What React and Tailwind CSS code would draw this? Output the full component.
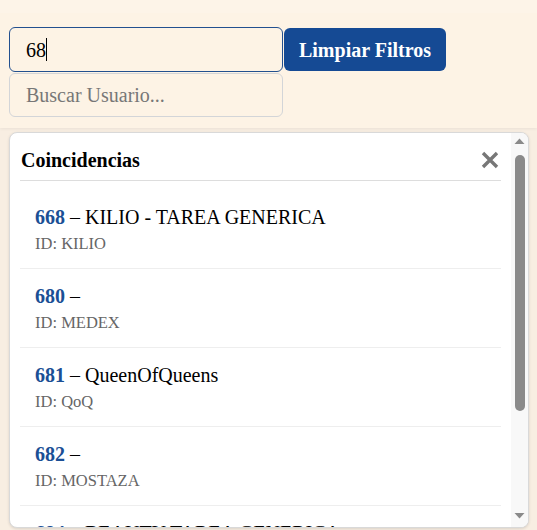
import React from "react";

const items = [
  { num: "668", name: "KILIO - TAREA GENERICA", id: "KILIO" },
  { num: "680", name: "", id: "MEDEX" },
  { num: "681", name: "QueenOfQueens", id: "QoQ" },
  { num: "682", name: "", id: "MOSTAZA" },
  { num: "684", name: "BEAUTY TAREA GENERICA", id: "BEAUTY" },
];

export default function App() {
  return (
    <div
      className="w-[537px] h-[530px] overflow-hidden bg-[#f8eee2] flex flex-col"
      style={{ fontFamily: '"Liberation Serif", "Times New Roman", serif' }}
    >
      <div className="h-[128px] shrink-0 bg-[#fdf3e5] border-t-[13px] border-[#fdf4e8] pt-[14px] pl-[9px] shadow-[0_1px_3px_rgba(0,0,0,0.06)]">
        <div className="flex items-start">
          <div className="flex flex-col">
            <div className="w-[274px] h-[45px] rounded-[6px] border border-[#23508f] bg-[#fdf3e5] flex items-center pl-[16px] text-[20px] text-black">
              <span>68</span>
              <span className="w-px h-[23px] bg-black"></span>
            </div>
            <div className="w-[274px] h-[44px] mt-px rounded-[6px] border border-[#d3d5d8] bg-[#fdf3e5] flex items-center pl-[16px] text-[20px] text-[#777777]">
              Buscar Usuario...
            </div>
          </div>
          <button className="ml-px mt-px w-[162px] h-[43px] rounded-[6px] bg-[#154a94] text-white font-bold text-[20px] flex items-center justify-center">
            Limpiar Filtros
          </button>
        </div>
      </div>
      <div className="mt-[4px] ml-[9px] w-[520px] h-[396px] shrink-0 bg-white rounded-[8px] border border-[#d9d9d9] shadow-[0_1px_3px_rgba(0,0,0,0.12)] overflow-hidden flex">
        <div className="flex-1 min-w-0 px-[10px] pt-[15px] overflow-hidden">
          <div className="flex items-center justify-between h-[23px]">
            <span className="font-bold text-[20px] text-black pl-px">Coincidencias</span>
            <svg width="20" height="20" viewBox="0 0 20 20" className="mr-[1px]">
              <path d="M3 3 L17 17 M17 3 L3 17" stroke="#777777" strokeWidth="3.4" strokeLinecap="butt" />
            </svg>
          </div>
          <div className="mt-[9px] border-t border-[#dddddd] pt-[9px]">
            {items.map((it, i) => (
              <div
                key={i}
                className="pl-[15px] pt-[16px] pb-[15px] border-b border-[#eeeeee]"
              >
                <div className="text-[20px] leading-[23px] text-black whitespace-nowrap">
                  <span className="text-[#1b4f95] font-bold">{it.num}</span>
                  {" – "}
                  {it.name}
                </div>
                <div className="mt-[5px] text-[16.5px] leading-[19px] text-[#666666]">ID: {it.id}</div>
              </div>
            ))}
          </div>
        </div>
        <div className="w-[17px] shrink-0 bg-[#f8f8f8] flex flex-col items-center">
          <svg width="17" height="17" viewBox="0 0 17 17" className="shrink-0">
            <path d="M3.5 11 L8.5 5.5 L13.5 11 Z" fill="#8a8a8a" />
          </svg>
          <div className="w-[10px] h-[256px] mt-[5px] rounded-full bg-[#8a8a8a]"></div>
          <div className="flex-1"></div>
          <svg width="17" height="17" viewBox="0 0 17 17" className="shrink-0 mb-[3px]">
            <path d="M3.5 6 L8.5 11.5 L13.5 6 Z" fill="#8a8a8a" />
          </svg>
        </div>
      </div>
    </div>
  );
}
